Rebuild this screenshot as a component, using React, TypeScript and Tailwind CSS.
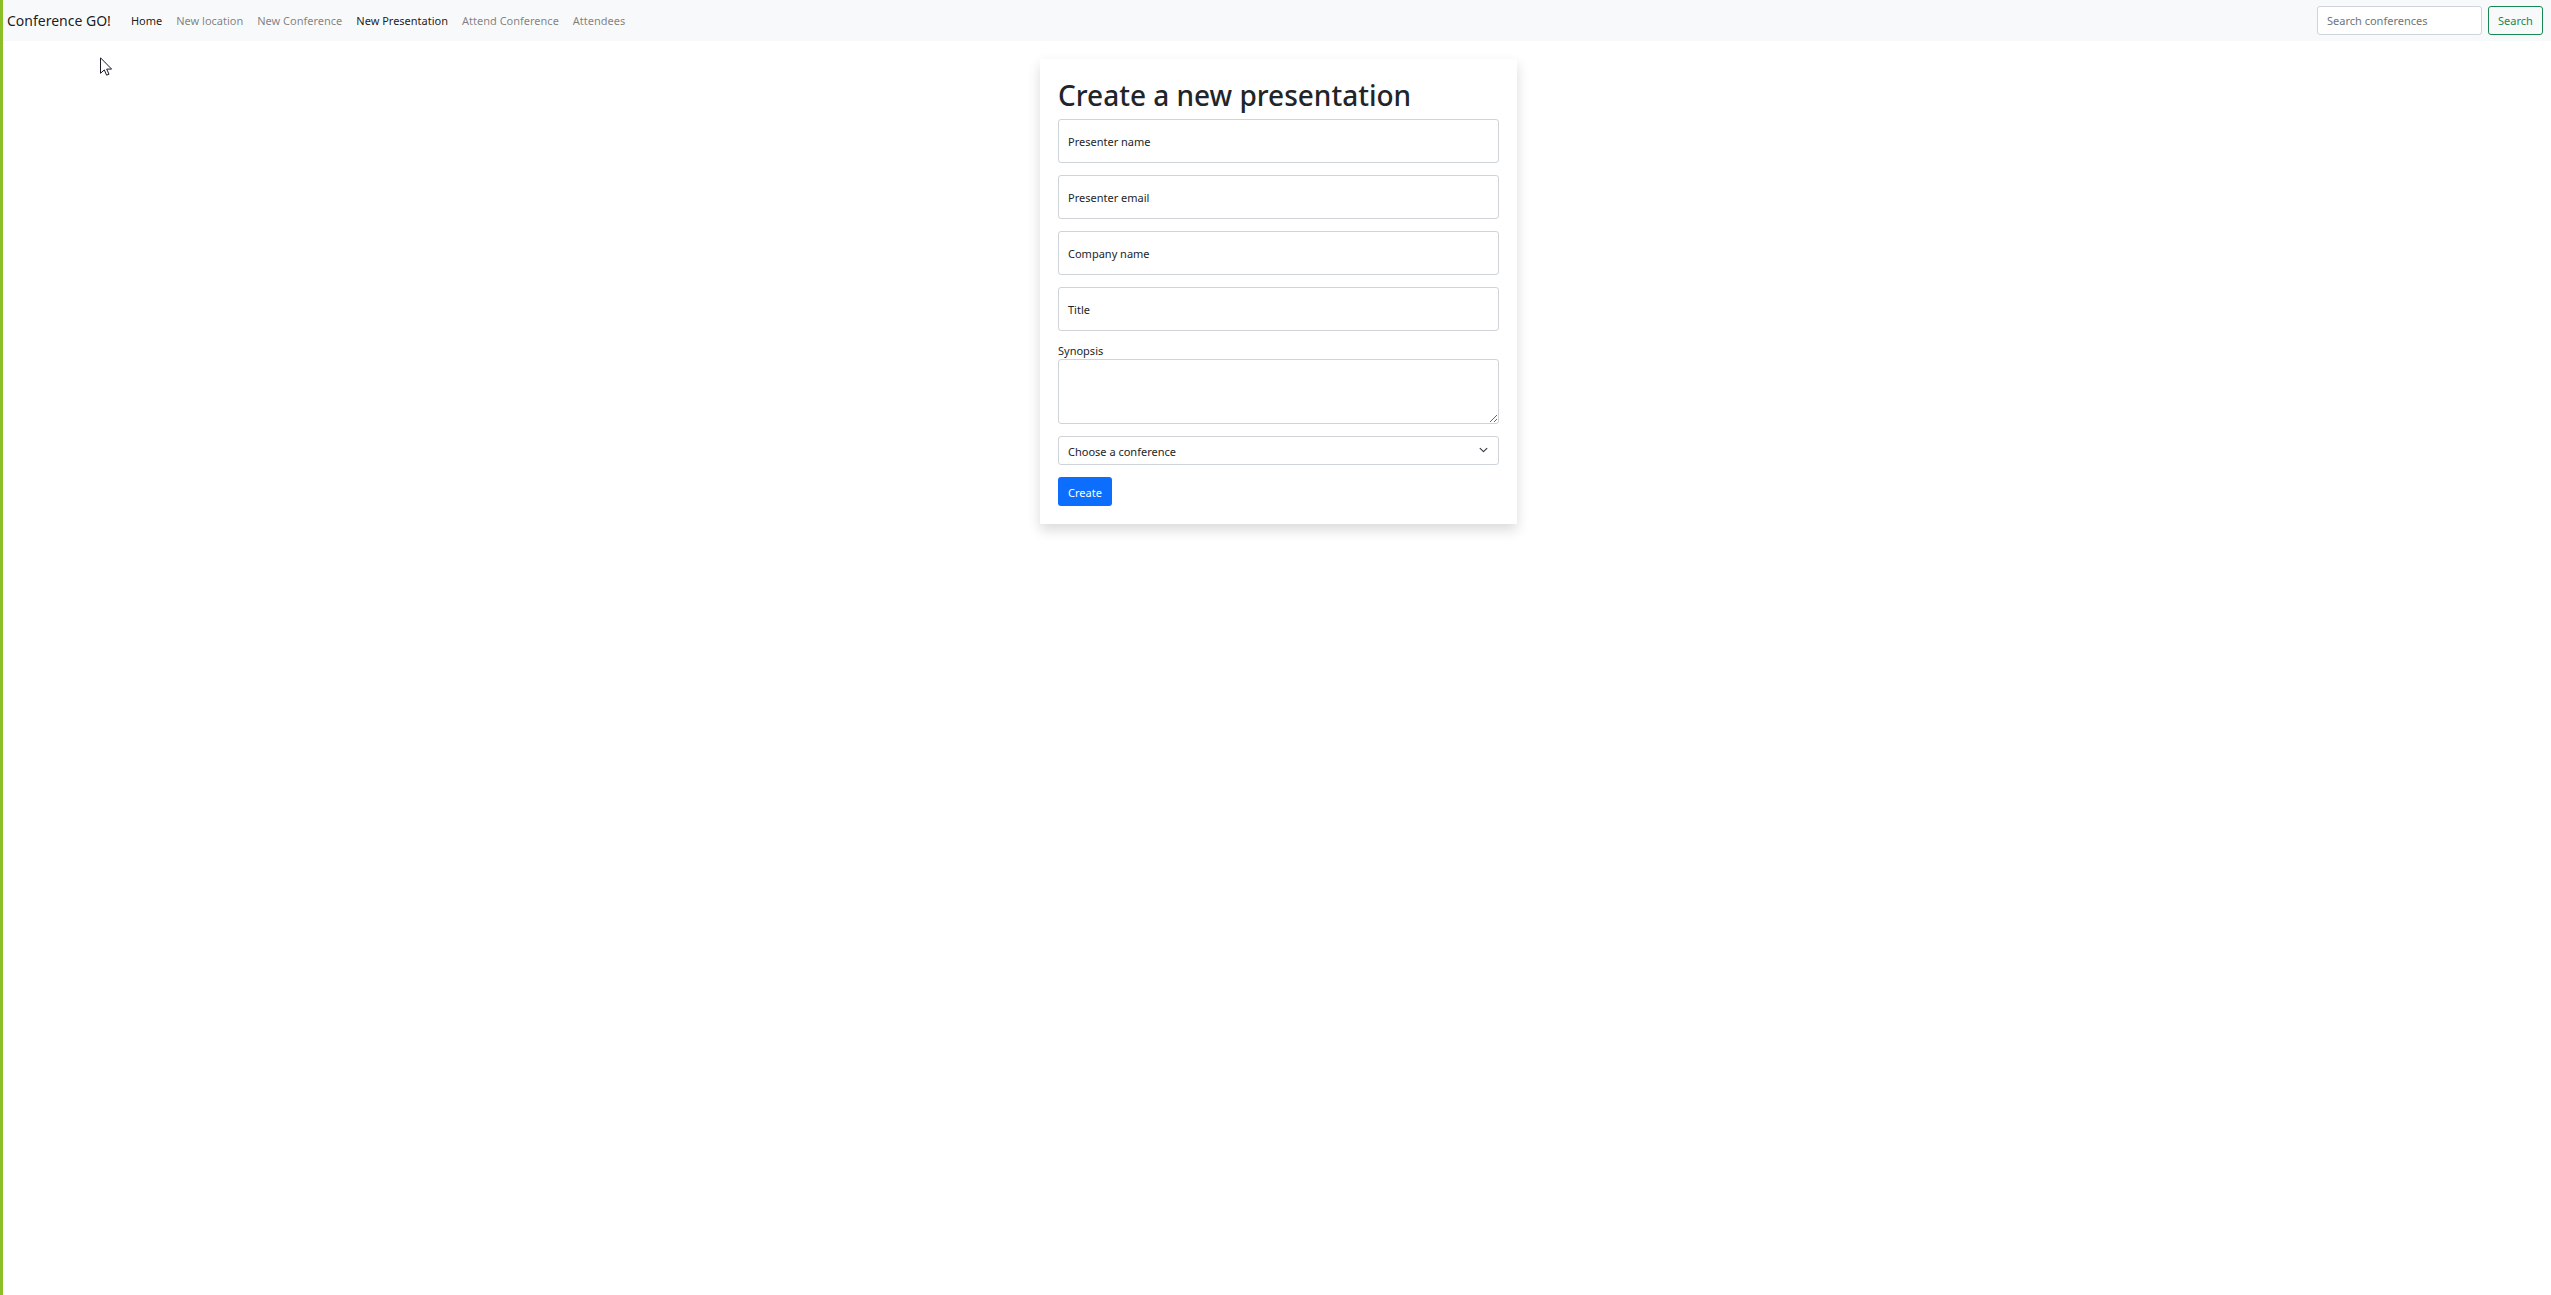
import React from "react";

const links = [
  { label: "Home", active: true },
  { label: "New location", active: false },
  { label: "New Conference", active: false },
  { label: "New Presentation", active: true },
  { label: "Attend Conference", active: false },
  { label: "Attendees", active: false },
];

const fields = [
  { id: "presenter_name", label: "Presenter name", type: "text" },
  { id: "presenter_email", label: "Presenter email", type: "email" },
  { id: "company_name", label: "Company name", type: "text" },
  { id: "title", label: "Title", type: "text" },
];

function NavBar() {
  return (
    <nav className="flex h-[41px] items-center bg-[#f8f9fa] pr-2 pl-1">
      <a href="#" className="mr-3.5 text-[14px] leading-6 whitespace-nowrap text-black/90">
        Conference GO!
      </a>
      <ul className="flex flex-1 gap-0.5">
        {links.map((link) => (
          <li key={link.label}>
            <a
              href="#"
              className={
                link.active
                  ? "block px-1.5 py-1.5 leading-[18px] whitespace-nowrap text-black/90"
                  : "block px-1.5 py-1.5 leading-[18px] whitespace-nowrap text-black/50"
              }
            >
              {link.label}
            </a>
          </li>
        ))}
      </ul>
      <form className="flex gap-1.5">
        <input
          type="search"
          aria-label="Search conferences"
          placeholder="Search conferences"
          className="h-[29px] w-[165px] rounded-[3px] border border-[#ced4da] bg-white px-[9px] placeholder:text-[#6c757d]"
        />
        <button
          type="button"
          className="h-[29px] w-[55px] rounded-[3px] border border-[#198754] text-center text-[#198754]"
        >
          Search
        </button>
      </form>
    </nav>
  );
}

function FloatingField({ id, label, type }: { id: string; label: string; type: string }) {
  return (
    <div className="relative mb-3">
      <input
        id={id}
        type={type}
        className="block h-11 w-full rounded-[3px] border border-[#ced4da] bg-white px-[9px]"
      />
      <label htmlFor={id} className="pointer-events-none absolute inset-y-0 left-2.5 flex items-center pt-0.5">
        {label}
      </label>
    </div>
  );
}

function PresentationForm() {
  return (
    <div className="w-[477px] bg-white p-[18px] shadow-[0_6px_12px_rgba(0,0,0,0.15)]">
      <h1 className="mb-1.5 text-[28px] leading-9 font-medium whitespace-nowrap">Create a new presentation</h1>
      <form>
        {fields.map((field) => (
          <FloatingField key={field.id} {...field} />
        ))}
        <div className="mb-3">
          <label htmlFor="synopsis" className="block leading-4">
            Synopsis
          </label>
          <textarea
            id="synopsis"
            className="block h-[65px] w-full resize-y rounded-[3px] border border-[#ced4da] bg-white px-[9px] py-1"
          />
        </div>
        <div className="relative mb-3">
          <select
            aria-label="Conference"
            className="block h-[29px] w-full appearance-none rounded-[3px] border border-[#ced4da] bg-white px-[9px] pt-0.5"
          >
            <option>Choose a conference</option>
          </select>
          <svg
            viewBox="0 0 16 16"
            className="pointer-events-none absolute top-2 right-[11px] h-3 w-[9px]"
            fill="none"
            stroke="#343a40"
            strokeWidth="2"
            strokeLinecap="round"
            strokeLinejoin="round"
          >
            <path d="M2 5l6 6 6-6" />
          </svg>
        </div>
        <button
          type="button"
          className="block h-[29px] w-[54px] rounded-[3px] bg-[#0d6efd] pt-0.5 text-center text-white"
        >
          Create
        </button>
      </form>
    </div>
  );
}

export default function App() {
  return (
    <div className="relative min-h-screen border-l-[3px] border-[#8cbf26] bg-white font-['Noto_Sans',sans-serif] text-[11px] leading-[18px] text-[#212529]">
      <NavBar />
      <main className="flex justify-center pt-[18px] pl-[3px]">
        <PresentationForm />
      </main>
      <svg viewBox="0 0 13 20" className="absolute top-[57px] left-[97px] h-5 w-[13px]" aria-hidden="true">
        <path
          d="M.5.8V16.3L4.3 12.9L6.6 18.2L9 17.2L6.7 12.1H11.6Z"
          fill="#fff"
          stroke="#1b1b2b"
          strokeWidth="1"
        />
      </svg>
    </div>
  );
}
